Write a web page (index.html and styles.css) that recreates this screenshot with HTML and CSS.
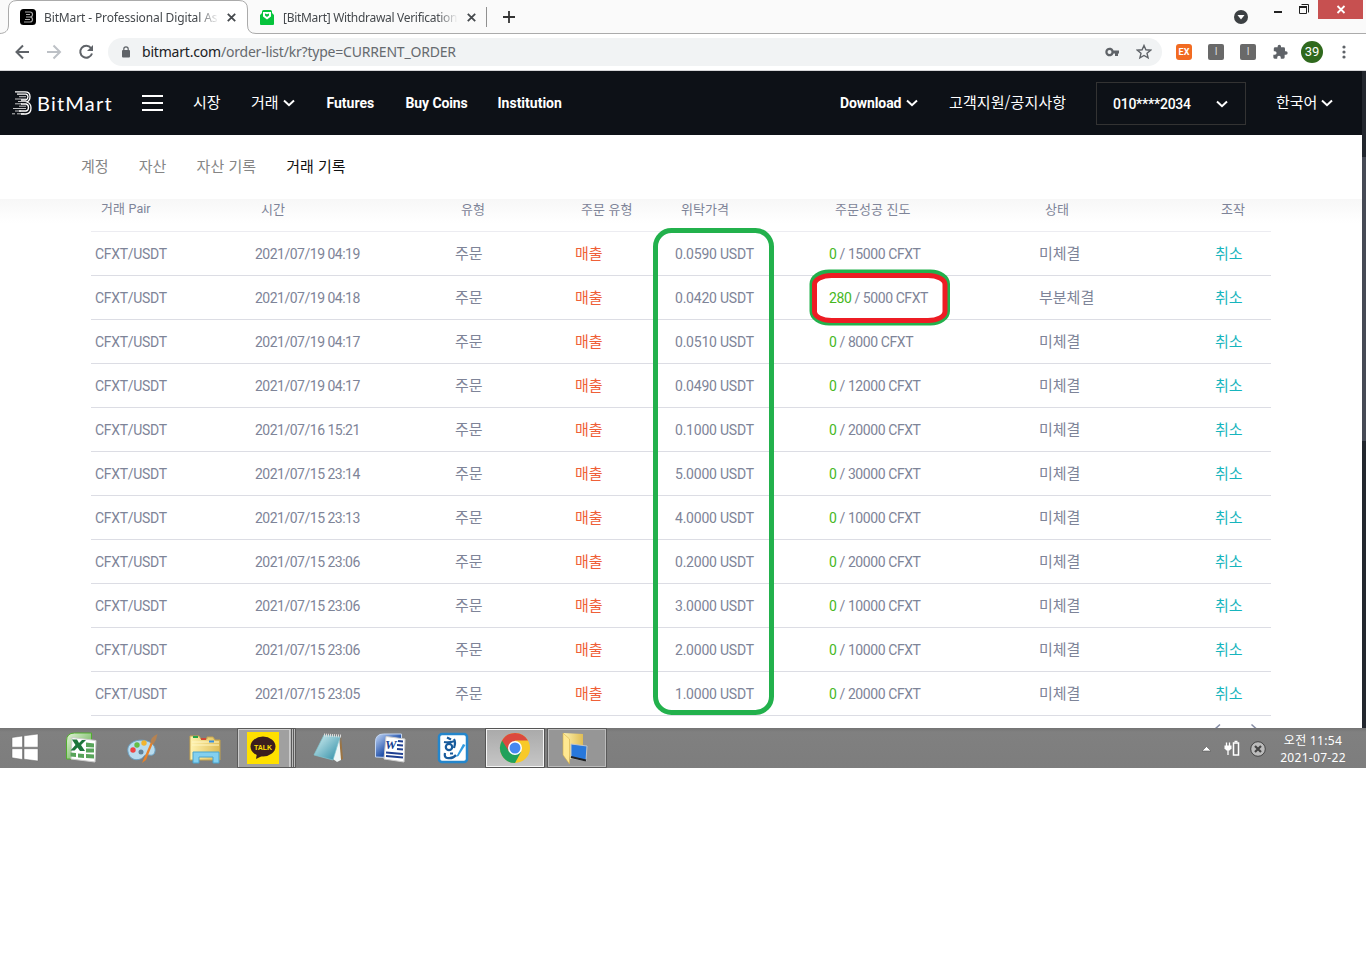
FILE: index.html
```html
<!DOCTYPE html>
<html lang="ko">
<head>
<meta charset="utf-8">
<title>BitMart</title>
<link rel="stylesheet" href="styles.css">
</head>
<body>
<div class="tabs">
  <svg class="tab-shape" width="1366" height="34" viewBox="0 0 1366 34"><path d="M-1 33.5C5 33.5 8.500 31 8.500 25V9Q8.500.5 17 .5H239Q247.500.5 247.500 9V25Q247.500 33.500 256 33.500H1367V40H-1Z" fill="#fff" stroke="#ababab"/></svg>
  <div class="tab tab-one">
    <svg width="16" height="16" viewBox="0 0 16 16"><rect width="16" height="16" rx="3.500" fill="#000"/><path d="M5 3h5q2.500 0 2.500 2.500T10 8q2.500 0 2.500 2.500T10 13H4M6 5.500h4M6 8h4M5 10.500h5" fill="none" stroke="#aaa" stroke-width="1.200"/></svg>
    <span class="tab-title t1">BitMart - Professional Digital As</span>
    <svg class="x" width="9" height="9" viewBox="0 0 9 9"><path d="M.8.8l7.400 7.400M8.200.8L.8 8.200" stroke="#45494d" stroke-width="1.800"/></svg>
  </div>
  <div class="tab tab-two">
    <svg width="14" height="15" viewBox="0 0 14 15"><path d="M0 5L2 3V1.500Q2 0 3.500 0h7Q12 0 12 1.500V3l2 2v9q0 1-1 1H1q-1 0-1-1z" fill="#06c33c"/><path d="M3 2h8v4.500L7 9.500 3 6.500z" fill="#fff"/><path d="M5 3.500l2 .8 2-.8v2L7 7 5 5.500z" fill="#06c33c"/></svg>
    <span class="tab-title t2">[BitMart] Withdrawal Verification</span>
    <svg class="x" width="9" height="9" viewBox="0 0 9 9"><path d="M.8.8l7.400 7.400M8.200.8L.8 8.200" stroke="#45494d" stroke-width="1.800"/></svg>
  </div>
  <i class="tab-line"></i>
  <svg class="plus" width="12" height="12" viewBox="0 0 12 12"><path d="M6 0v12M0 6h12" stroke="#333" stroke-width="1.800"/></svg>
  <div class="window">
    <svg width="132" height="26" viewBox="0 0 132 26"><circle cx="7" cy="17" r="7" fill="#3c4043"/><path d="M3.500 15h7L7 19.500z" fill="#fff"/><path d="M40 12h8" stroke="#222" stroke-width="2"/><path d="M67.500 4.500h7v8M65.500 6.500h7v7h-7z" fill="none" stroke="#222" stroke-width="1"/><path d="M65 7h8" stroke="#222" stroke-width="2"/><path d="M84 0h45v19H84z" fill="#c75050"/><path d="M103.500 6l7 7M110.500 6l-7 7" stroke="#fff" stroke-width="1.800"/></svg>
  </div>
</div>
<div class="toolbar">
  <svg class="nav-icons" width="80" height="16" viewBox="0 0 80 16"><g fill="none" stroke-width="2"><path d="M14 8H2M8 1.500L1.500 8 8 14.500" stroke="#5f6368"/><path d="M32 8h12.500M38.500 1.500L45 8l-6.500 6.500" stroke="#bdc1c6"/><path d="M76 4A6 6 0 1 0 77 9.500" stroke="#5f6368"/></g><path d="M78 1v6h-6z" fill="#5f6368"/></svg>
  <div class="omnibox">
    <svg width="8" height="12" viewBox="0 0 8 12"><rect y="4" width="8" height="7.500" rx="1" fill="#5f6368"/><path d="M1.800 5V3a2.200 2.200 0 0 1 4.400 0V5" fill="none" stroke="#5f6368" stroke-width="1.200"/></svg>
    <span class="url"><b>bitmart.com</b>/order-list/kr?type=CURRENT_ORDER</span>
    <svg class="key" width="15" height="10" viewBox="0 0 15 10"><path d="M8.600 3.500H14V6.500H13V9H10V6.500H8.600A4.300 4.300 0 1 1 8.600 3.500ZM4.500 3A2 2 0 1 0 4.500 7 2 2 0 1 0 4.500 3Z" fill="#5f6368" fill-rule="evenodd"/></svg>
    <svg width="16" height="16" viewBox="0 0 16 16"><path d="M8 1.500l1.900 4.300 4.700.4-3.600 3.100 1.100 4.600L8 11.500l-4.100 2.400L5 9.300 1.400 6.200l4.700-.4z" fill="none" stroke="#5f6368" stroke-width="1.400"/></svg>
  </div>
  <div class="extensions">
    <span class="ext orange">EX</span>
    <span class="ext">I</span>
    <span class="ext">I</span>
    <svg width="16" height="16" viewBox="0 0 24 24"><path d="M21 11h-1.500V7q0-2-2-2h-4V3.500a2.500 2.500 0 0 0-5 0V5H4.700q-2 0-2 2v3.800h1.500a2.700 2.700 0 0 1 0 5.400H2V20q0 2 2 2h3.800v-1.500a2.700 2.700 0 0 1 5.400 0V22H17q2 0 2-2v-4h2a2.500 2.500 0 0 0 0-5z" fill="#5f6368"/></svg>
    <span class="avatar">39</span>
    <svg class="dots" width="4" height="14" viewBox="0 0 4 14"><g fill="#5f6368"><circle cx="2" cy="2" r="1.600"/><circle cx="2" cy="7" r="1.600"/><circle cx="2" cy="12" r="1.600"/></g></svg>
  </div>
</div>
<div class="page">
  <div class="site">
    <header class="header">
      <svg class="mark" width="21" height="24" viewBox="0 0 21 24"><g fill="none" stroke="#fff"><path d="M3 .8h10q5 0 5 4.700 0 4-3 5.500 4 1.500 4 6 0 5.500-5 6H9" stroke-width="1.300"/><path d="M5 3.200h9q2 .5 2 2.500t-2 3.300H9M9 13h5q2.500.5 2.500 3.500T14 20H7" stroke-width="1.300"/><path d="M7 5.700h7M3 8h11M6 10.500h9M3 12.800h7M7 15.200h7M1 17.500h13M3 20h6M0 22.800h3M5 22.800h7" stroke-width="1" opacity=".75"/></g></svg>
      <span class="brand">BitMart</span>
      <i class="burger"></i>
      <span class="ko n1">시장</span>
      <span class="ko n2">거래<svg width="12" height="8" viewBox="0 0 12 8"><path d="M1 1.500l5 4.700 5-4.700" fill="none" stroke="#fff" stroke-width="2"/></svg></span>
      <span class="lat n3">Futures</span>
      <span class="lat n4">Buy Coins</span>
      <span class="lat n5">Institution</span>
      <span class="lat n6">Download<svg width="12" height="8" viewBox="0 0 12 8"><path d="M1 1.500l5 4.700 5-4.700" fill="none" stroke="#fff" stroke-width="2"/></svg></span>
      <span class="ko n7">고객지원/공지사항</span>
      <span class="account"><span>010****2034</span><svg width="12" height="8" viewBox="0 0 12 8"><path d="M1 1.500l5 4.700 5-4.700" fill="none" stroke="#fff" stroke-width="2"/></svg></span>
      <span class="ko n8">한국어<svg width="12" height="8" viewBox="0 0 12 8"><path d="M1 1.500l5 4.700 5-4.700" fill="none" stroke="#fff" stroke-width="2"/></svg></span>
    </header>
    <nav class="subnav"><span>계정</span><span>자산</span><span>자산 기록</span><span class="active">거래 기록</span></nav>
    <main class="orders">
      <div class="row head"><span>거래 <em>Pair</em></span><span>시간</span><span>유형</span><span>주문 유형</span><span>위탁가격</span><span>주문성공 진도</span><span>상태</span><span>조작</span></div>
      <div class="row"><span class="pair">CFXT/USDT</span><span class="time">2021/07/19 04:19</span><span>주문</span><span class="sell">매출</span><span class="price">0.0590 USDT</span><span class="amount"><em>0</em> / 15000 CFXT</span><span>미체결</span><span class="cancel">취소</span></div>
      <div class="row"><span class="pair">CFXT/USDT</span><span class="time">2021/07/19 04:18</span><span>주문</span><span class="sell">매출</span><span class="price">0.0420 USDT</span><span class="amount"><em>280</em> / 5000 CFXT</span><span>부분체결</span><span class="cancel">취소</span></div>
      <div class="row"><span class="pair">CFXT/USDT</span><span class="time">2021/07/19 04:17</span><span>주문</span><span class="sell">매출</span><span class="price">0.0510 USDT</span><span class="amount"><em>0</em> / 8000 CFXT</span><span>미체결</span><span class="cancel">취소</span></div>
      <div class="row"><span class="pair">CFXT/USDT</span><span class="time">2021/07/19 04:17</span><span>주문</span><span class="sell">매출</span><span class="price">0.0490 USDT</span><span class="amount"><em>0</em> / 12000 CFXT</span><span>미체결</span><span class="cancel">취소</span></div>
      <div class="row"><span class="pair">CFXT/USDT</span><span class="time">2021/07/16 15:21</span><span>주문</span><span class="sell">매출</span><span class="price">0.1000 USDT</span><span class="amount"><em>0</em> / 20000 CFXT</span><span>미체결</span><span class="cancel">취소</span></div>
      <div class="row"><span class="pair">CFXT/USDT</span><span class="time">2021/07/15 23:14</span><span>주문</span><span class="sell">매출</span><span class="price">5.0000 USDT</span><span class="amount"><em>0</em> / 30000 CFXT</span><span>미체결</span><span class="cancel">취소</span></div>
      <div class="row"><span class="pair">CFXT/USDT</span><span class="time">2021/07/15 23:13</span><span>주문</span><span class="sell">매출</span><span class="price">4.0000 USDT</span><span class="amount"><em>0</em> / 10000 CFXT</span><span>미체결</span><span class="cancel">취소</span></div>
      <div class="row"><span class="pair">CFXT/USDT</span><span class="time">2021/07/15 23:06</span><span>주문</span><span class="sell">매출</span><span class="price">0.2000 USDT</span><span class="amount"><em>0</em> / 20000 CFXT</span><span>미체결</span><span class="cancel">취소</span></div>
      <div class="row"><span class="pair">CFXT/USDT</span><span class="time">2021/07/15 23:06</span><span>주문</span><span class="sell">매출</span><span class="price">3.0000 USDT</span><span class="amount"><em>0</em> / 10000 CFXT</span><span>미체결</span><span class="cancel">취소</span></div>
      <div class="row"><span class="pair">CFXT/USDT</span><span class="time">2021/07/15 23:06</span><span>주문</span><span class="sell">매출</span><span class="price">2.0000 USDT</span><span class="amount"><em>0</em> / 10000 CFXT</span><span>미체결</span><span class="cancel">취소</span></div>
      <div class="row"><span class="pair">CFXT/USDT</span><span class="time">2021/07/15 23:05</span><span>주문</span><span class="sell">매출</span><span class="price">1.0000 USDT</span><span class="amount"><em>0</em> / 20000 CFXT</span><span>미체결</span><span class="cancel">취소</span></div>
      <svg class="pager" width="50" height="12" viewBox="0 0 50 12"><path d="M5 8l5-4.500M41.500 3.500l5 4.500" fill="none" stroke="#858ca5" stroke-width="1.500"/></svg>
    </main>
  </div>
  <div class="scrollbar"></div>
</div>
<footer class="taskbar">
  <svg class="task-icons" width="620" height="40" viewBox="0 0 620 40">
    <defs>
      <linearGradient id="folder" x2="1"><stop stop-color="#fff3b0"/><stop offset="1" stop-color="#dfbd55"/></linearGradient>
      <linearGradient id="note" x2="1" y2="1"><stop stop-color="#d7f2f4"/><stop offset="1" stop-color="#2b8ba4"/></linearGradient>
      <linearGradient id="green" x2="1" y2="1"><stop stop-color="#e2f5d8"/><stop offset="1" stop-color="#54a43f"/></linearGradient>
      <linearGradient id="blue" x2="1" y2="1"><stop stop-color="#c6daf9"/><stop offset=".6" stop-color="#1b4ba6"/></linearGradient>
      <linearGradient id="active" x2="0" y2="1"><stop stop-color="#aaa"/><stop offset="1" stop-color="#c6c6c6"/></linearGradient>
    </defs>
    <path d="M12 9.500l10.500-1.500v11.200H12zM24 7.800l14-1.800v13.200H24zM12 20.700h10.500v10.800L12 29.800zM24 20.700h14V33l-14-1.800z" fill="#fff" stroke="#666" stroke-width=".5"/>
    <path d="M66.500 31V13q0-8 8-8h17v26z" fill="url(#green)" stroke="#51ad2e"/><path d="M72 9.500l24 3-1 21.500-24-3z" fill="#fff" stroke="#ccc"/><path d="M86 14.500l8 1v4l-8-.5zM86 20.500h8v4h-8zM86 26l8 .5v4l-8-.5zM78 25.500l6 .5v4l-6-.5zM70.500 24.500l5.500.5v4l-5.500-.5z" fill="#58a45a"/><path d="M72 11.500h5l2 3.500 3-3h4l-5 5 4 6h-5l-2.500-3.500-3 3h-4l5-5.500z" fill="#1c753b"/>
    <path d="M128 24c-2-9 9-14 19-11 7 2 10 8 7 13-3 3-7-1-10 2-3 5-14 6-16-4z" fill="#b9dcef" stroke="#6ca2c4"/><circle cx="133" cy="22" r="2.700" fill="#e44"/><circle cx="137" cy="17" r="2.700" fill="#65bd45"/><circle cx="144" cy="15" r="2.700" fill="#f2b52e"/><circle cx="141" cy="24" r="2.500" fill="#638298"/><path d="M142 35l9-21 2 1-7 17z" fill="#e7822a"/><path d="M150.500 15q0-6 7-9-1 6-4 10z" fill="#b58251"/>
    <path d="M190 12V8h9l2 3h6V9h6l2 3h5v20h-30z" fill="url(#folder)" stroke="#c5a34d"/><path d="M192 14h27M192 17h27" stroke="#fff7c5"/><path d="M193 9h5" stroke="#27a447" stroke-width="2"/><path d="M201 11h5" stroke="#ce4937" stroke-width="2"/><path d="M209 13.500h5" stroke="#368fdd" stroke-width="2"/><path d="M193 35V24h26v11h-6v-6h-14v6z" fill="#83d0ef" stroke="#4aa4ce"/>
    <rect x="238.500" y="1.500" width="51" height="38" fill="#a0a0a0" stroke="#ccc"/><path d="M237.500.5h58v39h-58zM291.500 1v38M293.500 1v38" fill="none" stroke="#5a5a5a"/><path d="M290.500 1v38M292.500 1v38M294.500 1v38" stroke="#bbb"/><rect x="247" y="4" width="32" height="32" fill="#ffe000"/><path d="M257 25l-1 6 8-4z" fill="#3b1e1e"/><ellipse cx="263" cy="18.500" rx="12.500" ry="10" fill="#3b1e1e"/><text class="talk" x="254" y="22" textLength="18" lengthAdjust="spacingAndGlyphs">TALK</text>
    <path d="M341 8l2 23-5 2z" fill="#9c7443"/><path d="M339 8l2 24-4 2-4-3z" fill="#eef6f6"/><path d="M324 7l16 2-7 23-19-5z" fill="url(#note)" stroke="#81c7d1" stroke-width=".7"/><path d="M324 7l17 1" stroke="#ddd" stroke-width="3" stroke-dasharray="1 1"/>
    <path d="M375.500 29V14q0-8 8-8h18v24z" fill="url(#blue)" stroke="#c3d6f2"/><path d="M386 8.500l19 2.500-1 23-20-3z" fill="#fff" stroke="#ccc"/><path d="M398 13l5 .5M397 17l6 .5M397 21l6 .5M386 24.500l17 1.500M386 28l17 1.500" stroke="#1f3f91" stroke-width="2"/><text class="word" x="385" y="21">W</text>
    <rect x="439" y="6" width="28" height="28" rx="3" fill="#fff" stroke="#2486cc" stroke-width="2.500"/><g fill="none" stroke="#185b9c" stroke-width="2.200"><path d="M447 9.500l4 2M444 14q5 1 11-1M454 11q2 3 0 9"/><circle cx="449" cy="19" r="3.200"/><path d="M445 25q-1 4 2 5 6 1 9-3M450 25.500h3"/></g><path d="M456 29l7-13 2.500 1-7 11z" fill="#329ce1"/>
    <path d="M485.500.5h59v39h-59z" fill="none" stroke="#555"/><rect x="486.500" y="1.500" width="57" height="37" fill="url(#active)" stroke="#f5f5f5"/><circle cx="515" cy="20" r="15" fill="#f8c928"/><path d="M502 12.500A15 15 0 0 0 515 35l6-11-6-4z" fill="#20a15b"/><path d="M502 12.500A15 15 0 0 1 528 12.500H515l-6 11z" fill="#db4a3f"/><circle cx="515" cy="20" r="7" fill="#fff"/><circle cx="515" cy="20" r="5.500" fill="#4688f1"/>
    <path d="M547.500.5h59v39h-59z" fill="none" stroke="#5a5a5a"/><rect x="548.500" y="1.500" width="57" height="37" fill="#969696" stroke="#bbb"/><path d="M563 5l20 1v24l-13 1z" fill="url(#folder)"/><path d="M571 16l16 2-1 15-15-3z" fill="#2878db" stroke="#c2c6ca"/><path d="M571 29l15 3.500" stroke="#222" stroke-width="2"/><path d="M563 5l6.500 6v25l-6.500-9z" fill="#ffe891" stroke="#d5ae48" stroke-width=".6"/>
  </svg>
  <svg class="tray" width="70" height="20" viewBox="0 0 70 20"><path d="M2 13l4.500-4.500L11 13z" fill="#fff" stroke="#555" stroke-width=".6"/><path d="M26.500 4.500v4M29.500 4.500v4M28 10v7" stroke="#fff" fill="none" stroke-width="1.300"/><path d="M24.500 7.500h7v3l-2 2h-3l-2-2z" fill="#fff"/><path d="M33.500 5h5v12h-5z" fill="#777" stroke="#fff" stroke-width="1.500"/><path d="M34.500 3.500h3" stroke="#fff" stroke-width="1.500"/><circle cx="58" cy="11" r="7.300" fill="#bbb" stroke="#444"/><path d="M55 8l6 6M61 8l-6 6" stroke="#444" stroke-width="2.200"/></svg>
  <div class="clock"><span class="clock-time">오전 11:54</span><span>2021-07-22</span></div>
</footer>
<svg class="annotation" width="320" height="500" viewBox="0 0 320 500"><g fill="none" stroke-width="5"><rect x="15.500" y="10.500" width="116" height="482" rx="16" stroke="#22b14c"/><rect x="172" y="52" width="135.500" height="51" rx="17" ry="12" stroke="#22b14c"/><rect x="174.500" y="55.500" width="130.500" height="45" rx="17" ry="9" stroke="#ed1c24"/></g></svg>
</body>
</html>
```
FILE: styles.css
```css
* { box-sizing: border-box; }
body { margin: 0; width: 1366px; height: 959px; overflow: hidden; background: #fff; font-family: "Noto Sans", "Noto Sans CJK KR", sans-serif; position: relative; }
svg { display: block; flex: none; }
.tabs { height: 34px; display: flex; align-items: center; background: #fafafa; position: relative; }
.tab-shape { position: absolute; left: 0; top: 0; }
.tab { display: flex; align-items: center; position: relative; height: 34px; }
.tab-one { width: 237px; margin-left: 20px; gap: 8px; }
.tab-two { width: 220px; margin-left: 3px; gap: 9px; }
.tab-title { width: 175px; font-size: 12px; color: #45494d; white-space: nowrap; -webkit-mask-image: linear-gradient(90deg, #000 88%, transparent); mask-image: linear-gradient(90deg, #000 88%, transparent); }
.t1 { letter-spacing: -.13px; }
.t2 { letter-spacing: -.3px; }
.tab .x { margin-left: 0; }
.tab-line { width: 1px; height: 20px; background: #909090; margin-left: 6px; position: relative; }
.plus { margin-left: 16px; position: relative; }
.window { margin-left: auto; align-self: flex-start; position: relative; width: 132px; }
.toolbar { height: 37px; display: flex; align-items: center; border-bottom: 1px solid #d5d6d8; }
.nav-icons { margin-left: 15px; }
.omnibox { width: 1054px; height: 28px; margin-left: 13px; padding: 0 10px 0 14px; border-radius: 14px; background: #f1f3f4; display: flex; align-items: center; }
.url { margin-left: 12px; font-size: 14px; letter-spacing: -.2px; color: #666a6f; white-space: nowrap; line-height: 20px; }
.url b { font-weight: 400; color: #202124; }
.key { margin-left: auto; margin-right: 16px; }
.extensions { display: flex; align-items: center; margin-left: 14px; gap: 16px; }
.ext { width: 16px; height: 16px; border-radius: 2px; background: #696969; color: #ddd; font: 10px/16px Roboto, sans-serif; text-align: center; }
.ext.orange { background: #f26b21; border-radius: 3px; font-weight: 700; font-size: 9px; color: #fff; }
.avatar { width: 22px; height: 22px; margin-left: -3px; border-radius: 50%; background: #2f691d; color: #fff; font: 13px/22px Roboto, sans-serif; text-align: center; }
.dots { margin-left: 3px; }
.page { height: 657px; display: flex; overflow: hidden; }
.site { width: 1362px; }
.scrollbar { width: 4px; background: linear-gradient(#23272e 86px, #464a55 86px, #464a55 370px, #23272e 370px); }
.header { height: 64px; background: #0d1117; color: #fff; display: flex; align-items: center; padding-left: 12px; }
.brand { width: 75px; margin-left: 4px; font: 20px/24px Lato, sans-serif; letter-spacing: 1.2px; }
.burger { width: 21px; height: 16px; margin-left: 30px; border: solid #fff; border-width: 2px 0; background: linear-gradient(transparent 5px, #fff 5px, #fff 7px, transparent 7px); }
.ko { display: flex; align-items: center; font: 15px/22px "Noto Sans CJK KR", sans-serif; white-space: nowrap; padding-bottom: 2px; }
.ko svg { margin: 2px 0 0 4px; }
.lat svg { margin-left: 5px; }
.lat { display: flex; align-items: center; font: 700 14px/20px Roboto, "Noto Sans", sans-serif; letter-spacing: 0; white-space: nowrap; }
.n1 { width: 58px; margin-left: 30px; }
.n2 { width: 75.500px; }
.n3 { width: 79px; }
.n4 { width: 92px; letter-spacing: -.1px; }
.n5 { width: 342.500px; }
.n6 { width: 109px; letter-spacing: -.1px; }
.n7 { width: 147px; letter-spacing: .1px; }
.account { width: 150px; height: 43px; padding: 1px 17px 0 16px; border: 1px solid #333; display: flex; align-items: center; justify-content: space-between; font: 500 14px/20px Roboto, sans-serif; letter-spacing: -.25px; }
.n8 { margin-left: 30px; }
.subnav { height: 64px; display: flex; align-items: center; gap: 30.2px; padding: 0 0 2px 81px; color: #858585; background: #fff; font: 15px/22px "Noto Sans CJK KR", sans-serif; }
.subnav .active { color: #111; }
.orders { height: 529px; padding-left: 91px; background: linear-gradient(#f7f7f7, #fff 24px); }
.row { width: 1180px; height: 44px; padding-left: 4px; border-bottom: 1px solid #dcdde4; display: grid; grid-template-columns: 160px 200px 120px 100px 154px 210px 176px 52px; align-items: center; color: #7e8498; font: 15px/22px "Noto Sans CJK KR", sans-serif; white-space: nowrap; }
.row > span { padding-bottom: 2px; }
.row.head { height: 33px; padding: 0 0 12px 10px; font-size: 13px; line-height: 18px; border-bottom-color: #ececf1; }
.row em { font-style: normal; }
.head em { font-family: Roboto, sans-serif; font-size: 12.500px; }
.row > .pair, .row > .time, .row > .price, .row > .amount { font: 14px/20px Roboto, sans-serif; padding: 0; }
.pair { letter-spacing: -.3px; }
.time { letter-spacing: -.5px; }
.price { letter-spacing: -.22px; }
.amount { letter-spacing: -.42px; }
.amount em { color: #46b81e; }
.sell { color: #ef6038; }
.cancel { color: #17b5bd; }
.pager { margin-left: 1119px; margin-top: 5px; }
.taskbar { height: 40px; display: flex; align-items: center; color: #fff; background: linear-gradient(#747474, #808080 4px, #7d7d7d); }
.tray { margin-left: 580px; }
.talk { font: 700 8px "Liberation Sans", sans-serif; fill: #ffe000; }
.word { font: italic 700 13px "Liberation Serif", serif; fill: #173f91; }
.clock { margin-left: 8px; padding-top: 1px; width: 70px; display: flex; flex-direction: column; text-align: center; font: 12px/17px "Noto Sans", "Noto Sans CJK KR", sans-serif; letter-spacing: .3px; white-space: nowrap; }
.annotation { position: absolute; left: 640px; top: 220px; }
```
